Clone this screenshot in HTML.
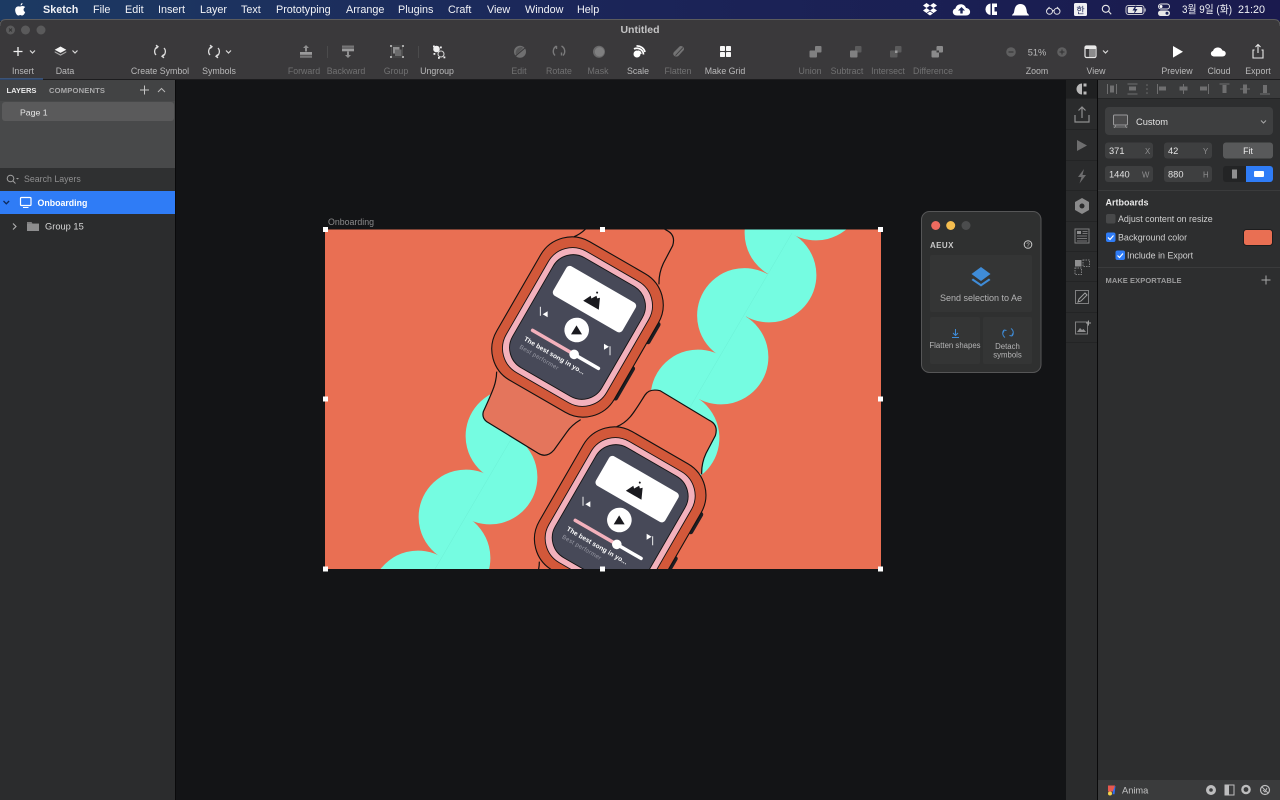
<!DOCTYPE html>
<html lang="en"><head><meta charset="utf-8"><title>Sketch</title>
<style>
html,body{margin:0;padding:0;width:1280px;height:800px;overflow:hidden;background:#131416}
svg{display:block;font-family:"Liberation Sans","Noto Sans CJK KR",sans-serif}
.m{font-size:10.8px;fill:#f2f3f7}
.l{font-size:8.8px;fill:#b9b9ba;text-anchor:middle}
.d{font-size:8.8px;fill:#717172;text-anchor:middle}
.ic{fill:none;stroke:#d8d8d8;stroke-width:1.2}
.w{fill:none;stroke:#e8e8e8;stroke-width:1.1}
.g{fill:none;stroke:#7a7a7b;stroke-width:1.4}
</style></head><body>
<svg width="1280" height="800" viewBox="0 0 1280 800" xmlns="http://www.w3.org/2000/svg">
<defs>
<linearGradient id="mb" x1="0" x2="1" y1="0" y2="0"><stop offset="0" stop-color="#1c3a63"/><stop offset=".5" stop-color="#1b2458"/><stop offset="1" stop-color="#1a1a4e"/></linearGradient>
<clipPath id="ab"><rect x="325" y="229.5" width="556" height="339.5"/></clipPath>
</defs>
<rect width="1280" height="800" fill="#131416"/>
<rect width="1280" height="21" fill="url(#mb)"/>
<!-- menu -->
<path transform="translate(-5.500 -3) scale(1.300)" d="M21.500 4.500c-.9.2-1.500 1-1.400 2 .9 0 1.500-1 1.400-2zM19.200 7.300c-2.200-.6-3.400 1.100-3.300 3 .1 1.800 1.200 3.900 2.400 3.900.7 0 1-.4 1.500-.4s.8.4 1.500.4c1 0 1.900-1.500 2.300-2.600-1.600-.7-1.700-3 0-3.800-.8-1-2.500-1.100-3.200-.7-.3.200-.5.200-.7.200z" fill="#fff"/>
<text x="43" y="13" class="m" font-weight="700">Sketch</text>
<text x="93" y="13" class="m">File</text>
<text x="125" y="13" class="m">Edit</text>
<text x="158" y="13" class="m">Insert</text>
<text x="200" y="13" class="m">Layer</text>
<text x="241" y="13" class="m">Text</text>
<text x="276" y="13" class="m">Prototyping</text>
<text x="346" y="13" class="m">Arrange</text>
<text x="398" y="13" class="m">Plugins</text>
<text x="448" y="13" class="m">Craft</text>
<text x="487" y="13" class="m">View</text>
<text x="525" y="13" class="m">Window</text>
<text x="577" y="13" class="m">Help</text>
<!-- status icons -->
<path d="M926.500 3l3.500 2.500-3.500 2.500L923 5.500zM933.500 3L937 5.500 933.500 8 930 5.500zM926.500 8l3.500 2.500-3.500 2.500L923 10.500zM933.500 8l3.500 2.500-3.500 2.500-3.500-2.500zM930 11.500l3 2-3 2-3-2z" fill="#fff"/>
<path d="M957 15.500c-5 0-5.500-6-1.500-7 1-5.500 9-5.500 10.500-.5 5.500 .5 5.500 7.500 0 7.500z" fill="#fff"/><path d="M961.500 7l-3.500 3.500h2.300v3h2.400v-3h2.300z" fill="#1b2458"/>
<path d="M990.500 3.500a5.800 5.800 0 0 0 0 11.500z" fill="#fff"/><path d="M992 3.500h5v3.500h-5zM992 11.500h5v3.500h-5zM992 7h2.500v4.500H992z" fill="#fff"/>
<path d="M1012 15.500c0-1 1.200-1.500 1.800-2.500.8-1.500.2-9 6.700-9s6 7.500 6.700 9c.6 1 1.800 1.500 1.800 2.500z" fill="#fff"/>
<g fill="none" stroke="#e0e0e4" stroke-width="1"><circle cx="1049.500" cy="11.300" r="3"/><circle cx="1057" cy="11.300" r="3"/><path d="M1052.500 11c.7-.6 1-.6 1.500 0M1046.500 10.500l3-3.500M1060 10.500l-3-3.500"/></g>
<rect x="1074" y="3" width="13" height="13" rx="1.500" fill="#f0f0f4"/><text x="1080.500" y="13.500" font-size="9" fill="#1b2458" text-anchor="middle">한</text>
<circle cx="1105.800" cy="8.800" r="3.500" fill="none" stroke="#e8e8e8" stroke-width="1.100"/><path d="M1108.500 11.300l2.700 3" stroke="#e8e8e8" stroke-width="1.100"/>
<rect x="1126" y="5.500" width="18" height="9" rx="2.500" fill="none" stroke="#c8c8d0" stroke-width="1"/><rect x="1127.800" y="7" width="14.500" height="6" rx="1" fill="#e8e8e8"/><rect x="1144.700" y="8.500" width="1" height="3" fill="#c8c8d0"/><path d="M1135.500 5.500l-3 5h2.300l-1 4 3.700-5.500h-2.300l1.300-3.500z" fill="#1b2458"/>
<rect x="1158.500" y="4" width="11" height="5" rx="2.500" fill="none" stroke="#e8e8e8"/><circle cx="1161" cy="6.500" r="1.500" fill="#fff"/><rect x="1158" y="10.500" width="12" height="5.500" rx="2.700" fill="#e8e8e8"/><circle cx="1167" cy="13.200" r="1.500" fill="#1b2458"/>
<text x="1182" y="13" class="m" font-size="10" textLength="50" lengthAdjust="spacingAndGlyphs">3월 9일 (화)</text><text x="1238" y="13" class="m" textLength="27">21:20</text>

<!-- window chrome -->
<path d="M0 80V26Q0 19.500 6 19.500H1274Q1280 19.500 1280 26V80Z" fill="#3a393b"/>
<path d="M0 26Q0 19.500 6 19.500H1274Q1280 19.500 1280 26" fill="none" stroke="#5c5c5d" stroke-width="1"/>
<rect x="0" y="79" width="1280" height="1" fill="#1c1c1e"/>
<rect x="0" y="78.500" width="43" height="1" fill="#3f6fb5"/>
<circle cx="10.500" cy="30" r="4.500" fill="#5a5a5b"/><path d="M9 28.500l3 3M12 28.500l-3 3" stroke="#333" stroke-width=".9"/>
<circle cx="25.500" cy="30" r="4.500" fill="#5a5a5b"/><circle cx="41" cy="30" r="4.500" fill="#5a5a5b"/>
<text x="640" y="33" text-anchor="middle" font-size="10.500" font-weight="700" fill="#c4c4c5">Untitled</text>

<!-- toolbar labels -->
<text x="23" y="74" class="l">Insert</text><text x="65" y="74" class="l">Data</text>
<text x="160" y="74" class="l">Create Symbol</text><text x="219" y="74" class="l">Symbols</text>
<text x="304" y="74" class="d">Forward</text><text x="346" y="74" class="d">Backward</text>
<text x="396" y="74" class="d">Group</text><text x="437" y="74" class="l">Ungroup</text>
<text x="519" y="74" class="d">Edit</text><text x="559" y="74" class="d">Rotate</text><text x="598" y="74" class="d">Mask</text>
<text x="638" y="74" class="l">Scale</text><text x="678" y="74" class="d">Flatten</text><text x="725" y="74" class="l">Make Grid</text>
<text x="810" y="74" class="d">Union</text><text x="847" y="74" class="d">Subtract</text><text x="888" y="74" class="d">Intersect</text><text x="933" y="74" class="d">Difference</text>
<text x="1037" y="74" class="l">Zoom</text><text x="1096" y="74" class="l">View</text>
<text x="1177" y="74" class="l">Preview</text><text x="1219" y="74" class="l">Cloud</text><text x="1258" y="74" class="l">Export</text>

<!-- toolbar icons -->
<path d="M13.500 51.500h9M18 47v9" stroke="#f0f0f0" stroke-width="1.300"/><path d="M30 50.500l2.500 2.500 2.500-2.500" class="ic"/>
<path d="M60.500 46.500l5.800 3.200-5.800 3.200-5.800-3.200z" fill="#f4f4f4"/><path d="M54.700 51.200l5.800 3.200 5.800-3.200v1.300l-5.800 3.200-5.800-3.200z" fill="#a8a8a8"/><path d="M72.500 50.500l2.500 2.500 2.500-2.500" class="ic"/>
<g fill="none" stroke="#dcdcdc" stroke-width="1.300"><path d="M158 46.500a5.300 5.300 0 0 0-2 8.500M162 56.500a5.300 5.300 0 0 0 2-8.500"/><path d="M156 45.200l2 1.500-1.800 1.800M164 57.800l-2-1.500 1.800-1.800"/></g>
<g fill="none" stroke="#dcdcdc" stroke-width="1.300"><path d="M212 46.500a5.300 5.300 0 0 0-2 8.500M216 56.500a5.300 5.300 0 0 0 2-8.500"/><path d="M210 45.200l2 1.500-1.800 1.800M218 57.800l-2-1.500 1.800-1.800"/></g><path d="M226 50.500l2.500 2.500 2.500-2.500" class="ic"/>
<path d="M306 45l-3 3h2v3.500h2V48h2z" fill="#8f8f90"/><rect x="300" y="52" width="12" height="2.800" fill="#9a9a9b"/><rect x="300" y="55.500" width="12" height="2.300" fill="#757576"/>
<rect x="327" y="46" width="1" height="12" fill="#4b4b4c"/>
<rect x="342" y="45.500" width="12" height="2.300" fill="#757576"/><rect x="342" y="48.500" width="12" height="2.800" fill="#9a9a9b"/><path d="M348 58l3-3h-2v-3.500h-2V55h-2z" fill="#8f8f90"/>
<rect x="393" y="47" width="6.500" height="6.500" fill="#909091"/><rect x="395" y="49.500" width="6.500" height="6.500" fill="#6a6a6b"/><rect x="391.500" y="46" width="11" height="11" fill="none" stroke="#555" stroke-width=".8"/><g fill="#a8a8a8"><rect x="390" y="45" width="2" height="2"/><rect x="402" y="45" width="2" height="2"/><rect x="390" y="56" width="2" height="2"/><rect x="402" y="56" width="2" height="2"/></g>
<rect x="418" y="46" width="1" height="12" fill="#4b4b4c"/>
<circle cx="436.500" cy="49" r="3.300" fill="#f0f0f0"/><circle cx="441" cy="54" r="3" fill="none" stroke="#cfcfcf" stroke-width="1.100"/><g fill="#f0f0f0"><rect x="433" y="45.500" width="1.800" height="1.800"/><rect x="440" y="46.500" width="1.800" height="1.800"/><rect x="433.500" y="53" width="1.800" height="1.800"/><rect x="443.500" y="56.500" width="1.800" height="1.800"/><rect x="438" y="57" width="1.800" height="1.800"/></g>
<circle cx="520" cy="51.800" r="6" fill="#6f6f70"/><path d="M515.500 56l9.500-8" stroke="#3a393b" stroke-width="1.100"/><path d="M516 55l7-7-1-1a6 6 0 0 0-6 8z" fill="#565657"/>
<path d="M556.500 46a6 6 0 0 0-1.500 9.500M561.500 46a6 6 0 0 1 1.500 9.500M556.500 46v3M561.500 55.500v-3" class="g"/>
<circle cx="599" cy="51.800" r="6" fill="#6a6a6b"/><circle cx="599.500" cy="51.800" r="4.700" fill="#7f7f80"/>
<circle cx="637" cy="54" r="3.500" fill="#fff"/><path d="M634 49a6.500 6.500 0 0 1 9.500 5.500M636.500 46a8 8 0 0 1 8.500 6" fill="none" stroke="#fff" stroke-width="1.700"/><path d="M641 54a3 3 0 0 0-3-3" fill="none" stroke="#fff" stroke-width="1.300"/>
<path d="M674 55.500c-1.500-1.500-.5-3 .5-4l5-5c2-1.500 5.500 1 4.300 3.500l-5 5.500c-1.500 1.500-3.500 1.500-4.800 0z" fill="#737374"/><path d="M675.500 55.500l7.500-8" stroke="#3a393b" stroke-width=".9"/>
<rect x="720" y="46" width="5" height="5" rx=".8" fill="#f6f6f6"/><rect x="726" y="46" width="5" height="5" rx=".8" fill="#f6f6f6"/><rect x="720" y="52" width="5" height="5" rx=".8" fill="#f6f6f6"/><rect x="726" y="52" width="5" height="5" rx=".8" fill="#f6f6f6"/>
<rect x="815" y="46" width="6.500" height="6.500" rx="1" fill="#808081"/><rect x="809.500" y="50.500" width="7.500" height="7" rx="1" fill="#808081"/>
<rect x="855" y="46" width="6.500" height="6.500" rx="1" fill="#5b5b5c"/><rect x="850" y="50.500" width="7.500" height="7" rx="1" fill="#808081"/>
<rect x="895" y="46" width="6.500" height="6.500" rx="1" fill="#5b5b5c"/><rect x="890" y="50.500" width="7.500" height="7" rx="1" fill="#5b5b5c"/><rect x="895" y="50.500" width="2.500" height="2.500" fill="#9a9a9b"/>
<rect x="936.500" y="46" width="6.500" height="6.500" rx="1" fill="#8a8a8b"/><rect x="931.500" y="50.500" width="7.500" height="7" rx="1" fill="#8a8a8b"/><rect x="936.500" y="50.500" width="2.500" height="2" fill="#3a393b"/>
<circle cx="1011" cy="52" r="4.800" fill="#5f5f60"/><path d="M1008.500 52h5" stroke="#2f2f30"/>
<text x="1037" y="55.500" text-anchor="middle" font-size="9.300" fill="#b9b9ba">51%</text>
<circle cx="1062" cy="52" r="4.800" fill="#5f5f60"/><path d="M1059.500 52h5M1062 49.500v5" stroke="#2f2f30"/>
<rect x="1085" y="46" width="11" height="11.500" rx="1.500" fill="#3a393b" stroke="#e8e8e8" stroke-width="1.200"/><rect x="1085" y="46" width="11" height="3" fill="#e8e8e8"/><rect x="1089" y="49" width="6" height="8" fill="#8b8b8c"/><path d="M1103 50.500l2.500 2.500 2.500-2.500" class="ic"/>
<path d="M1173 46l10 5.800-10 5.800z" fill="#fff"/>
<path d="M1214.500 56.500c-4.500 0-4.500-5-1.500-5.500 1-4.500 8-4.800 9.500-.5 4.500.3 4.300 6-.2 6z" fill="#fff"/>
<path d="M1254.500 50h-1.500v8h10v-8h-1.500M1258 53v-8M1255.500 47l2.500-2.500 2.500 2.500" class="w"/>

<!-- left panel -->
<rect x="0" y="80" width="175" height="720" fill="#2b2c2d"/>
<rect x="0" y="80" width="175" height="88" fill="#48494a"/>
<rect x="0" y="80" width="175" height="21" fill="#424344"/>
<rect x="175" y="80" width="1" height="720" fill="#0a0a0b"/>
<text x="6.500" y="93" font-size="7.600" font-weight="700" fill="#eaeaea" textLength="30">LAYERS</text>
<text x="49" y="93" font-size="7.600" font-weight="700" fill="#a9a9aa" textLength="56">COMPONENTS</text>
<path d="M140 90h9M144.500 85.500v9" stroke="#c4c4c4" stroke-width="1"/><path d="M158 92l3.500-3.500 3.500 3.500" fill="none" stroke="#b8b8b8" stroke-width="1"/>
<rect x="2" y="102" width="172" height="19" rx="3" fill="#5a5a5b"/>
<text x="20" y="115.500" font-size="8.700" fill="#e6e6e6">Page 1</text>
<rect x="0" y="168" width="175" height="23" fill="#2f3031"/>
<circle cx="10.500" cy="178.500" r="3.300" fill="none" stroke="#a0a0a0"/><path d="M13 181l2.500 2.500" stroke="#a0a0a0"/><path d="M16 178l1.500 1.500 1.500-1.500" fill="#a0a0a0"/>
<text x="24" y="182" font-size="8.800" fill="#8f8f90">Search Layers</text>
<rect x="0" y="191" width="175" height="23" fill="#2f7cf6"/>
<path d="M3.500 201l2.800 2.800 2.800-2.800" fill="none" stroke="#0e2a5c" stroke-width="1.300"/>
<rect x="20.500" y="197.500" width="10.500" height="8" rx="1" fill="none" stroke="#fff" stroke-width="1.200"/><path d="M23 207.500h5.500" stroke="#fff"/>
<text x="37.500" y="206" font-size="8.800" font-weight="700" fill="#fff">Onboarding</text>
<path d="M13 223.500l3 3-3 3" fill="none" stroke="#b0b0b0" stroke-width="1.100"/>
<path d="M27 222h4.500l1 1.500H39V231H27z" fill="#7f7f80"/><rect x="27" y="224" width="12" height="7" fill="#8d8d8e"/>
<text x="45" y="229.500" font-size="9.300" fill="#d8d8d8">Group 15</text>

<!-- artboard -->
<text x="328" y="225" font-size="8.800" fill="#8b8b8c">Onboarding</text>
<g clip-path="url(#ab)">
<rect x="325" y="229" width="556" height="340" fill="#e96f53"/>
<g fill="#75fce1" stroke="#75fce1" stroke-width=".8">
<path transform="translate(816 193) rotate(-59.2)" d="M-47 0A47 47 0 0 0 47 0Z"/>
<path transform="translate(792 233) rotate(-59.2)" d="M-47 0A47 47 0 0 1 47 0Z"/>
<path transform="translate(769 275) rotate(-59.2)" d="M-47 0A47 47 0 0 0 47 0Z"/>
<path transform="translate(744.500 315.500) rotate(-59.2)" d="M-47 0A47 47 0 0 1 47 0Z"/>
<path transform="translate(721 357) rotate(-59.2)" d="M-47 0A47 47 0 0 0 47 0Z"/>
<path transform="translate(698 397) rotate(-59.2)" d="M-47 0A47 47 0 0 1 47 0Z"/>
<path transform="translate(672 438) rotate(-59.2)" d="M-47 0A47 47 0 0 0 47 0Z"/>
<path transform="translate(513 436) rotate(-59.2)" d="M-47 0A47 47 0 0 1 47 0Z"/>
<path transform="translate(490 477) rotate(-59.2)" d="M-47 0A47 47 0 0 0 47 0Z"/>
<path transform="translate(466 517) rotate(-59.2)" d="M-47 0A47 47 0 0 1 47 0Z"/>
<path transform="translate(443 558) rotate(-59.2)" d="M-47 0A47 47 0 0 0 47 0Z"/>
<path transform="translate(418 598) rotate(-59.2)" d="M-47 0A47 47 0 0 1 47 0Z"/>
</g>
<path d="M792 233L769 275L744.500 315.500L721 357L698 397L672 438M513 436L490 477L466 517L443 558L418 598" fill="none" stroke="#75fce1" stroke-width="3.500"/>
<path d="M792 233L672 438M513 436L418 598" fill="none" stroke="#6cefd5" stroke-width=".5"/>

<!-- watch 1 -->
<g transform="translate(370 225) scale(.33333)" stroke="#111" stroke-width="3.600">
<path d="M612 35C650 20 665 -10 697 -60Q710 -80 742 -73L890 16Q918 30 908 62L880 115Q866 145 867 178" fill="#e96f53"/>
<path d="M380 440C380 470 372 490 340 560Q335 578 350 590L505 685Q530 700 552 675L590 622Q605 600 632 584" fill="#e4755c"/>
</g>
<g transform="translate(577.500 327) rotate(30)">
<rect x="64" y="-45" width="7" height="25" rx="2.500" fill="#1d1d22"/><rect x="64" y="6" width="7" height="39" rx="2.500" fill="#1d1d22"/>
<rect x="-68" y="-80" width="136" height="160" rx="36" fill="#d2583a" stroke="#111" stroke-width="1.100"/>
<rect x="-58" y="-70" width="116" height="140" rx="28" fill="#f3b1bc" stroke="#111" stroke-width=".9"/>
<rect x="-51.500" y="-63.500" width="103" height="127" rx="23" fill="#474958" stroke="#111" stroke-width=".9"/>
<g transform="translate(.8 -1.600)">
<rect x="-40" y="-48" width="80" height="34" rx="4" fill="#fff"/>
<path d="M-9 -24L-5 -32L-3 -30L0 -35L2 -33L4 -35L9 -24Z" fill="#1a1a1f"/><circle cx="-1" cy="-38" r="1" fill="#1a1a1f"/>
<circle cx="0" cy="4.600" r="12.300" fill="#fff"/><path d="M0 -5L5.500 4H-5.500Z" fill="#1a1a1f" transform="translate(0 5) rotate(-30)"/>
<path d="M0 -3L5 0L0 3Z" fill="#fff" transform="translate(-33 5.500) rotate(150)"/><path d="M-3 -5V4" stroke="#fff" stroke-width=".9" transform="translate(-38 5.500) rotate(-30)"/>
<path d="M0 -3L5 0L0 3Z" fill="#fff" transform="translate(32 5.500) rotate(-30)"/><path d="M0 -4V5" stroke="#fff" stroke-width=".9" transform="translate(39 5.500) rotate(-30)"/>
<path d="M-38 27H10" stroke="#f3b1bc" stroke-width="3.500" stroke-linecap="round"/><path d="M10 27H38" stroke="#fff" stroke-width="3.500" stroke-linecap="round"/><circle cx="10" cy="27" r="4.800" fill="#fff"/>
<text x="-41" y="40" font-size="6.600" font-weight="700" fill="#fff" textLength="69" lengthAdjust="spacing">The best song in yo...</text>
<text x="-41" y="49" font-size="6" fill="#9a9ba6" textLength="44" lengthAdjust="spacing">Best performer</text>
</g>
</g>

<!-- watch 2 -->
<g transform="translate(412.670 415) scale(.33333)" stroke="#111" stroke-width="3.600">
<path d="M612 35C650 20 665 -10 697 -60Q710 -80 742 -73L890 16Q918 30 908 62L880 115Q866 145 867 178" fill="#e96f53"/>
<path d="M380 440C380 470 372 490 340 560Q335 578 350 590L505 685Q530 700 552 675L590 622Q605 600 632 584" fill="#e96f53"/>
</g>
<g transform="translate(620.170 517) rotate(30)">
<rect x="64" y="-45" width="7" height="25" rx="2.500" fill="#1d1d22"/><rect x="64" y="6" width="7" height="39" rx="2.500" fill="#1d1d22"/>
<rect x="-68" y="-80" width="136" height="160" rx="36" fill="#d2583a" stroke="#111" stroke-width="1.100"/>
<rect x="-58" y="-70" width="116" height="140" rx="28" fill="#f3b1bc" stroke="#111" stroke-width=".9"/>
<rect x="-51.500" y="-63.500" width="103" height="127" rx="23" fill="#474958" stroke="#111" stroke-width=".9"/>
<g transform="translate(.8 -1.600)">
<rect x="-40" y="-48" width="80" height="34" rx="4" fill="#fff"/>
<path d="M-9 -24L-5 -32L-3 -30L0 -35L2 -33L4 -35L9 -24Z" fill="#1a1a1f"/><circle cx="-1" cy="-38" r="1" fill="#1a1a1f"/>
<circle cx="0" cy="4.600" r="12.300" fill="#fff"/><path d="M0 -5L5.500 4H-5.500Z" fill="#1a1a1f" transform="translate(0 5) rotate(-30)"/>
<path d="M0 -3L5 0L0 3Z" fill="#fff" transform="translate(-33 5.500) rotate(150)"/><path d="M-3 -5V4" stroke="#fff" stroke-width=".9" transform="translate(-38 5.500) rotate(-30)"/>
<path d="M0 -3L5 0L0 3Z" fill="#fff" transform="translate(32 5.500) rotate(-30)"/><path d="M0 -4V5" stroke="#fff" stroke-width=".9" transform="translate(39 5.500) rotate(-30)"/>
<path d="M-38 27H10" stroke="#f3b1bc" stroke-width="3.500" stroke-linecap="round"/><path d="M10 27H38" stroke="#fff" stroke-width="3.500" stroke-linecap="round"/><circle cx="10" cy="27" r="4.800" fill="#fff"/>
<text x="-41" y="40" font-size="6.600" font-weight="700" fill="#fff" textLength="69" lengthAdjust="spacing">The best song in yo...</text>
<text x="-41" y="49" font-size="6" fill="#9a9ba6" textLength="44" lengthAdjust="spacing">Best performer</text>
</g>
</g>
</g>
<!-- handles -->
<g fill="#fff">
<rect x="323" y="227" width="5" height="5"/><rect x="600" y="227" width="5" height="5"/><rect x="878" y="227" width="5" height="5"/>
<rect x="323" y="396.500" width="5" height="5"/><rect x="878" y="396.500" width="5" height="5"/>
<rect x="323" y="566.500" width="5" height="5"/><rect x="600" y="566.500" width="5" height="5"/><rect x="878" y="566.500" width="5" height="5"/>
</g>

<!-- AEUX -->
<rect x="921.500" y="211.500" width="119.500" height="161" rx="8" fill="#2f3030" stroke="#565657" stroke-width="1"/>
<circle cx="935.700" cy="225.500" r="4.500" fill="#ee6a5f"/><circle cx="950.700" cy="225.500" r="4.500" fill="#f5bd4f"/><circle cx="966" cy="225.500" r="4.500" fill="#4b4c4d"/>
<text x="930" y="248" font-size="8" font-weight="700" fill="#c8c8c8" letter-spacing=".4">AEUX</text>
<circle cx="1028" cy="244.500" r="3.800" fill="none" stroke="#c8c8c8"/><text x="1028" y="247" font-size="6" fill="#c8c8c8" text-anchor="middle">?</text>
<rect x="930" y="255" width="102" height="57" rx="2" fill="#343535"/>
<path d="M981 267l9.500 7-9.500 7-9.500-7z" fill="#3f8cd8"/><path d="M973 278.500l8 5.500 8-5.500 1.500 1.500-9.500 6.500-9.500-6.500z" fill="#3f8cd8"/>
<text x="981" y="301" font-size="9" fill="#b4b4b5" text-anchor="middle">Send selection to Ae</text>
<rect x="930" y="317" width="50" height="47" rx="2" fill="#343535"/><rect x="983" y="317" width="49" height="47" rx="2" fill="#343535"/>
<path d="M955.500 329v6M953 333l2.500 2.500 2.500-2.500M952 337.500h7" fill="none" stroke="#3f8cd8" stroke-width="1"/>
<text x="955" y="348" font-size="7.800" fill="#b4b4b5" text-anchor="middle">Flatten shapes</text>
<path d="M1004 330a5 5 0 0 0 1 7.500M1012 336a5 5 0 0 0-1-7.500M1004 330l-.5 2.500M1004 330l2.500 .5M1012 336l.5-2.500M1012 336l-2.500-.5" fill="none" stroke="#3f8cd8" stroke-width="1"/>
<text x="1007.500" y="349" font-size="7.800" fill="#b4b4b5" text-anchor="middle">Detach</text>
<text x="1007.500" y="357.500" font-size="7.800" fill="#b4b4b5" text-anchor="middle">symbols</text>

<!-- strip -->
<rect x="1066" y="80" width="31" height="720" fill="#2a2b2c"/>
<rect x="1097" y="80" width="1" height="720" fill="#0a0a0b"/>
<rect x="1066" y="80" width="31" height="19" fill="#1f2021"/>
<g fill="#232425"><rect x="1066" y="98" width="31" height="1"/><rect x="1066" y="129" width="31" height="1"/><rect x="1066" y="160" width="31" height="1"/><rect x="1066" y="190" width="31" height="1"/><rect x="1066" y="221" width="31" height="1"/><rect x="1066" y="251" width="31" height="1"/><rect x="1066" y="281" width="31" height="1"/><rect x="1066" y="312" width="31" height="1"/><rect x="1066" y="342" width="31" height="1"/></g>
<path d="M1082 83.500a5.500 5.500 0 0 0 0 11zM1083.500 83.500h3v3h-3zM1083.500 91.500h3v3h-3z" fill="#b8b8b8"/>
<path d="M1075 115v7h14v-7M1082 118v-11M1078.500 110.500l3.500-3.500 3.500 3.500" fill="none" stroke="#8f8f90" stroke-width="1.200"/>
<path d="M1077 140l10 5.500-10 5.500z" fill="#6e6e6f"/>
<path d="M1084 169l-6 8h3.500l-2 6.500 6.500-8.500h-3.500z" fill="#6e6e6f"/>
<path d="M1082 198l7 4v8l-7 4-7-4v-8z" fill="#8a8a8b"/><circle cx="1082" cy="206" r="2.500" fill="#2a2b2c"/>
<rect x="1075" y="229" width="14" height="14" fill="none" stroke="#7f7f80"/><rect x="1077" y="231" width="4" height="3" fill="#8f8f90"/><path d="M1082.500 231.500h5M1082.500 233.500h5M1077 236h10M1077 238.500h10M1077 241h10" stroke="#8f8f90" stroke-width=".8"/>
<rect x="1075" y="260" width="6.500" height="6.500" fill="#8f8f90"/><rect x="1083" y="260" width="6.500" height="6.500" fill="none" stroke="#7f7f80" stroke-dasharray="1.500 1"/><rect x="1075" y="268" width="6.500" height="6.500" fill="none" stroke="#7f7f80" stroke-dasharray="1.500 1"/>
<rect x="1075.500" y="290.500" width="13" height="13" fill="none" stroke="#7f7f80"/><path d="M1078 302l1-3 6-6 2 2-6 6z" fill="none" stroke="#a0a0a0"/>
<rect x="1075.500" y="322" width="12" height="12" fill="none" stroke="#7f7f80"/><path d="M1077 332l3-4 2 2 1.500-1 2.500 3z" fill="#8f8f90"/><path d="M1086 323h5M1088.500 320.500v5" stroke="#a0a0a0"/>

<!-- inspector -->
<rect x="1098" y="80" width="182" height="720" fill="#2d2e2f"/>
<rect x="1098" y="80" width="182" height="18" fill="#3a3b3c"/>
<rect x="1098" y="98" width="182" height="1" fill="#242526"/>
<g fill="#6f6f70"><rect x="1107" y="84" width="1" height="10"/><rect x="1116" y="84" width="1" height="10"/><rect x="1110" y="85.500" width="4" height="7"/>
<rect x="1127.500" y="83.500" width="10" height="1"/><rect x="1127.500" y="93.500" width="10" height="1"/><rect x="1129" y="86.500" width="7" height="4"/>
<circle cx="1147" cy="85" r=".8"/><circle cx="1147" cy="89" r=".8"/><circle cx="1147" cy="93" r=".8"/>
<rect x="1157" y="84" width="1" height="10"/><rect x="1159" y="86.500" width="7" height="4"/>
<rect x="1183" y="84" width="1" height="10"/><rect x="1179.500" y="86.500" width="8" height="4"/>
<rect x="1208" y="84" width="1" height="10"/><rect x="1200" y="86.500" width="7" height="4"/>
<rect x="1219.500" y="83.500" width="10" height="1"/><rect x="1222.500" y="85" width="4" height="8"/>
<rect x="1240" y="88.500" width="10" height="1"/><rect x="1243" y="84.500" width="4" height="9"/>
<rect x="1260" y="93.500" width="10" height="1"/><rect x="1263" y="85" width="4" height="8"/></g>
<rect x="1105" y="107" width="168" height="28" rx="4" fill="#3e3f40"/>
<rect x="1113.500" y="115" width="14" height="10" rx="1" fill="#4b4b4c" stroke="#9a9a9b" stroke-width="1"/><path d="M1116 125l-1.500 3M1125 125l1.500 3M1113.500 127h14" stroke="#9a9a9b" stroke-width=".8" fill="none"/>
<text x="1136" y="125" font-size="9.300" fill="#e2e2e2">Custom</text>
<path d="M1261 120.500l2.500 2.500 2.500-2.500" fill="none" stroke="#a8a8a8"/>
<g fill="#3e3f40"><rect x="1105" y="142.500" width="48" height="16" rx="3"/><rect x="1164" y="142.500" width="48" height="16" rx="3"/><rect x="1105" y="166" width="48" height="16" rx="3"/><rect x="1164" y="166" width="48" height="16" rx="3"/></g>
<rect x="1223" y="142.500" width="50" height="16" rx="3" fill="#58595a"/>
<text x="1248" y="154" font-size="8.800" fill="#ececec" text-anchor="middle">Fit</text>
<g font-size="9.300" fill="#e2e2e2"><text x="1109" y="154">371</text><text x="1168" y="154">42</text><text x="1109" y="177.500">1440</text><text x="1168" y="177.500">880</text></g>
<g font-size="7.800" fill="#8f8f90"><text x="1145" y="154">X</text><text x="1203" y="154">Y</text><text x="1142" y="177.500">W</text><text x="1203" y="177.500">H</text></g>
<rect x="1223" y="166" width="50" height="16" rx="3" fill="#232425"/>
<path d="M1246 166h24a3 3 0 0 1 3 3v10a3 3 0 0 1-3 3h-24z" fill="#2f7cf6"/>
<rect x="1232" y="169.500" width="5" height="9" fill="#8f8f90"/><rect x="1254" y="171" width="10" height="6" rx="1" fill="#fff"/>
<rect x="1098" y="190" width="182" height="1" fill="#3a3b3c"/>
<text x="1105.500" y="205.500" font-size="9" font-weight="700" fill="#e8e8e8">Artboards</text>
<rect x="1106" y="214" width="9.500" height="9.500" rx="2" fill="#48494a"/>
<text x="1118" y="222" font-size="8.900" fill="#cfcfcf">Adjust content on resize</text>
<rect x="1106" y="232.500" width="9.500" height="9.500" rx="2" fill="#2f7cf6"/><path d="M1108 237.500l2 2 3.500-4" fill="none" stroke="#fff" stroke-width="1.200"/>
<text x="1118" y="240.500" font-size="8.900" fill="#cfcfcf">Background color</text>
<rect x="1243.500" y="229.500" width="29" height="16" rx="3" fill="#e96f53" stroke="#1d1d1e"/>
<rect x="1115.500" y="250.500" width="9.500" height="9.500" rx="2" fill="#2f7cf6"/><path d="M1117.500 255.500l2 2 3.500-4" fill="none" stroke="#fff" stroke-width="1.200"/>
<text x="1127" y="258.500" font-size="8.900" fill="#cfcfcf">Include in Export</text>
<rect x="1098" y="267" width="182" height="1" fill="#3a3b3c"/>
<text x="1105.500" y="283" font-size="7.500" font-weight="700" fill="#9a9a9b" textLength="76">MAKE EXPORTABLE</text>
<path d="M1261.500 280h9M1266 275.500v9" stroke="#a8a8a8"/>
<rect x="1098" y="780" width="182" height="20" fill="#3a3b3c"/>
<path d="M1108 785.500h7l-1.500 6h-5.500z" fill="#e8584f"/><path d="M1113 791l2-5 .5 .2-1 8h-2z" fill="#2f6ff0"/><circle cx="1110" cy="793.500" r="2" fill="#f5d24a"/>
<text x="1122" y="793.500" font-size="9.300" fill="#c4c4c5">Anima</text>
<circle cx="1211" cy="790" r="5" fill="#bdbdbe"/><circle cx="1211" cy="790" r="1.800" fill="#3a3b3c"/>
<rect x="1225" y="785" width="9" height="10" fill="none" stroke="#bdbdbe"/><rect x="1225" y="785" width="4" height="10" fill="#bdbdbe"/>
<circle cx="1246" cy="789.500" r="3.600" fill="none" stroke="#bdbdbe" stroke-width="2.400"/>
<circle cx="1265" cy="790" r="4.500" fill="none" stroke="#bdbdbe" stroke-width="1.200"/><path d="M1262 787l6 6M1263 790l2 2 2-4" fill="none" stroke="#bdbdbe" stroke-width=".9"/>
</svg>
</body></html>
